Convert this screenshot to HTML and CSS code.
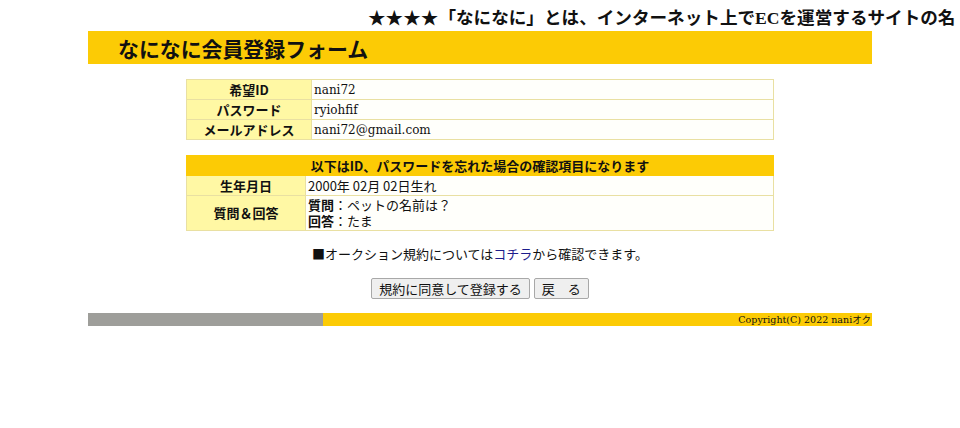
FILE: index.html
```html
<!DOCTYPE html>
<html lang="ja">
<head>
<meta charset="utf-8">
<title>なになに会員登録フォーム</title>
<link rel="stylesheet" href="styles.css">
</head>
<body>
<div class="ticker"><span class="ticker-text">★★★★「なになに」とは、インターネット上でECを運営するサイトの名</span></div>
<div class="page">
  <h1 class="title">なになに会員登録フォーム</h1>
  <table class="form-table">
    <tr><th>希望ID</th><td class="serif">nani72</td></tr>
    <tr><th>パスワード</th><td class="serif">ryiohfif</td></tr>
    <tr><th>メールアドレス</th><td class="serif">nani72@gmail.com</td></tr>
  </table>
  <table class="form-table second">
    <tr><th colspan="2" class="head">以下はID、パスワードを忘れた場合の確認項目になります</th></tr>
    <tr><th class="lbl">生年月日</th><td>2000年 02月 02日生れ</td></tr>
    <tr class="tall"><th class="lbl">質問＆回答</th><td><div class="qa"><b>質問</b>：ペットの名前は？</div><div class="qa"><b>回答</b>：たま</div></td></tr>
  </table>
  <p class="note">■オークション規約については<a href="#">コチラ</a>から確認できます。</p>
  <div class="buttons">
    <button type="button">規約に同意して登録する</button>
    <button type="button">戻　る</button>
  </div>
  <div class="footer">
    <div class="footer-gray"></div>
    <div class="footer-yellow"><span>Copyright(C) 2022 naniオク</span></div>
  </div>
</div>
</body>
</html>
```
FILE: styles.css
```css
html, body {
  margin: 0;
  padding: 0;
  background: #ffffff;
  color: #111;
  font-family: "Noto Sans CJK JP", "Noto Sans", sans-serif;
}
.ticker {
  height: 31px;
  overflow: hidden;
  white-space: nowrap;
  padding-left: 368px;
  box-sizing: border-box;
}
.ticker-text {
  display: inline-block;
  font-size: 17.6px;
  font-weight: bold;
  line-height: 18px;
  padding-top: 9px;
  font-family: "Liberation Serif", "Noto Sans CJK JP", serif;
}
.page {
  width: 784px;
  margin: 0 auto;
}
.title {
  margin: 0;
  height: 33px;
  background: #fccb05;
  font-size: 20.9px;
  line-height: 35px;
  padding-left: 30px;
  font-weight: bold;
  color: #111;
}
.form-table {
  width: 588px;
  margin: 15px auto 0;
  border-collapse: collapse;
  font-size: 13px;
}
.form-table th,
.form-table td {
  border: 1px solid #e9e0a2;
  height: 19px;
  padding: 0 2px;
  line-height: 16px;
}
.form-table th {
  width: 120px;
  background: #fff8a4;
  font-weight: bold;
  text-align: center;
}
.form-table td {
  background: #fffffb;
  text-align: left;
}
.form-table td.serif {
  font-family: "DejaVu Serif", "Noto Sans CJK JP", serif;
  font-size: 12px;
}
.form-table.second th.lbl {
  width: 114px;
}
.form-table th.head {
  background: #fccb05;
  border-color: #fccb05;
}
.form-table tr.tall td,
.form-table tr.tall th {
  height: 34px;
}
.qa {
  height: 16px;
  line-height: 16px;
  overflow: visible;
}
.note {
  margin: 14px 0 0;
  text-align: center;
  font-size: 13px;
  line-height: 18px;
}
.note a {
  color: #1c1c8c;
  text-decoration: none;
}
.buttons {
  margin-top: 15px;
  display: flex;
  justify-content: center;
  gap: 4px;
}
.buttons button {
  font-family: "Noto Sans CJK JP", sans-serif;
  font-size: 13px;
  line-height: 16px;
  height: 21px;
  padding: 0 7px;
  background: #efefef;
  border: 1px solid #a8a8a8;
  border-radius: 2px;
  color: #111;
}
.footer {
  margin-top: 14px;
  display: flex;
  height: 13px;
}
.footer-gray {
  width: 235px;
  background: #9e9e9a;
}
.footer-yellow {
  flex: 1;
  background: #fccb05;
  text-align: right;
  overflow: hidden;
  white-space: nowrap;
  height: 13px;
}
.footer-yellow span {
  font-family: "DejaVu Serif", "Noto Sans CJK JP", serif;
  font-size: 9.5px;
  line-height: 13px;
  height: 13px;
  display: block;
  padding-right: 1px;
}
```
